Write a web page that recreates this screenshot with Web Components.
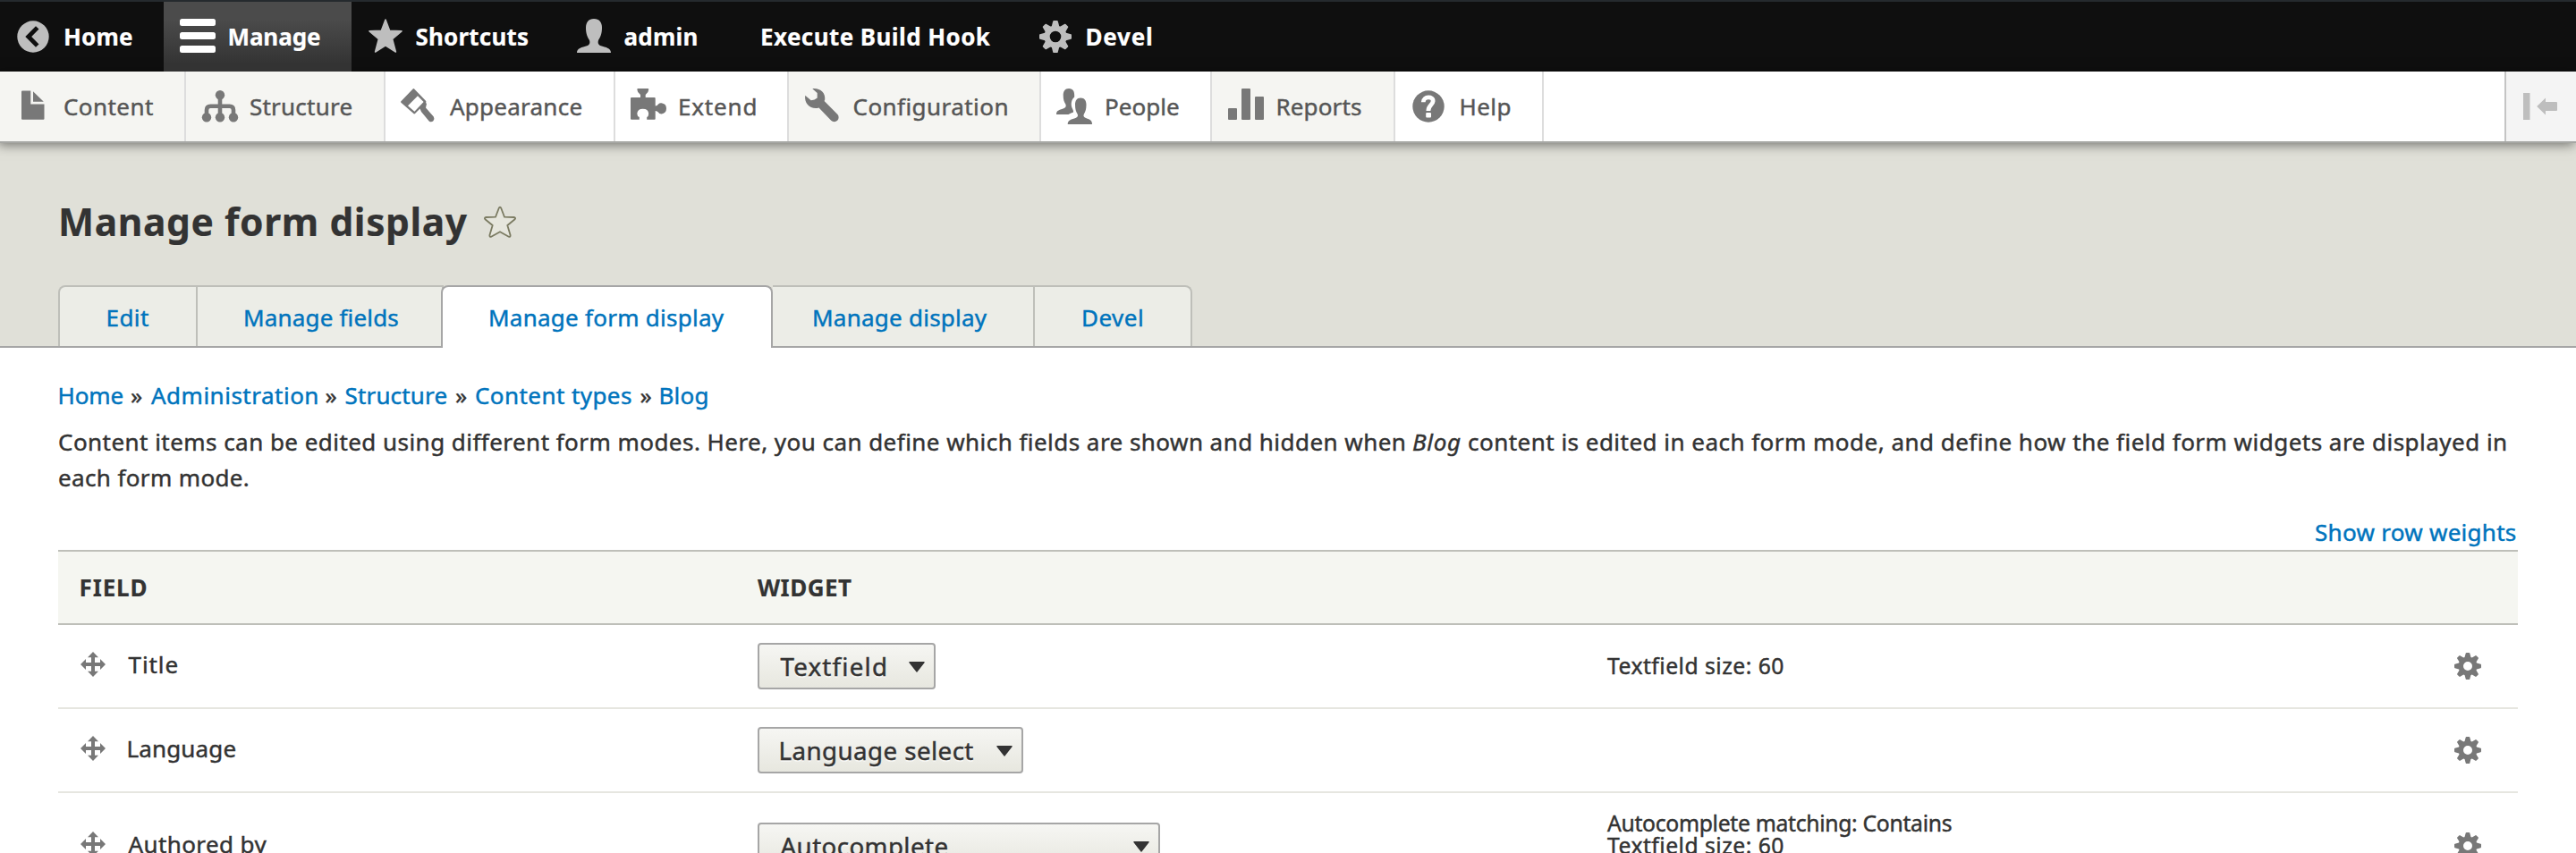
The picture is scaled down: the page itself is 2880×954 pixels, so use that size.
<!DOCTYPE html>
<html lang="en">
<head>
<meta charset="utf-8">
<title>Manage form display</title>
<style>
html,body{margin:0;padding:0}
body{width:2880px;height:954px;overflow:hidden;background:#fff;color:#333;font:26px/40px "Noto Sans","Open Sans",sans-serif}
</style>
</head>
<body>
<admin-page></admin-page>
<script>
/* Base class: attaches an open shadow root holding the given styles and markup */
class Base extends HTMLElement {
  mount(css, html) {
    if (!this.shadowRoot) this.attachShadow({mode: 'open'});
    const t = document.createElement('template');
    t.innerHTML = '<style>' + css + '</style>' + html;
    this.shadowRoot.replaceChildren(t.content.cloneNode(true));
  }
  a(n, d = '') { return this.getAttribute(n) ?? d; }
}

/* Text run tracked out to an exact optical width: w = ink width, size, weight, italic */
const ctx = document.createElement('canvas').getContext('2d');
customElements.define('fit-text', class extends Base {
  connectedCallback() {
    const text = this.textContent, size = +this.a('size', 26), wt = this.a('weight', '400');
    const st = this.hasAttribute('italic') ? 'italic' : 'normal', w = +this.a('w');
    ctx.font = `${st} ${wt} ${size}px "Noto Sans"`;
    ctx.letterSpacing = '0.01px';
    const m = ctx.measureText(text);
    const left = -m.actualBoundingBoxLeft, ink = m.actualBoundingBoxRight - left;
    const ls = (w - ink) / Math.max(1, text.length - 1);
    this.mount(`:host{display:block;flex:none;width:${w}px;white-space:pre;font-size:${size}px;font-weight:${wt};font-style:${st};letter-spacing:${ls.toFixed(3)}px;-webkit-text-stroke:${wt === '400' ? .45 : .2}px currentColor}
      span{display:block;width:max-content;margin-left:${(-left).toFixed(2)}px}`, '<span><slot></slot></span>');
  }
});

const cog = (c, cy, r, hole) => {
  const k = r / 18; let s = '';
  for (let i = 0; i < 8; i++) s += `<path transform="rotate(${i * 45} ${c} ${cy})" d="M${c - 4.4 * k} ${cy - 11 * k}L${c - 2.7 * k} ${cy - r + .6}q.2-.6 .9-.6h${5.4 * k - 1.8}q.7 0 .9.6L${c + 4.4 * k} ${cy - 11 * k}z"/>`;
  return s + `<circle cx="${c}" cy="${cy}" r="${(12.6 * k + hole) / 2}" fill="none" stroke="currentColor" stroke-width="${12.6 * k - hole}"/>`;
};
const ICONS = {
  back: '<path fill-rule="evenodd" d="M1.3 20a17.7 17.7 0 1 0 35.4 0a17.7 17.7 0 1 0-35.4 0zM22 8.2L25.5 11.6 17.2 20l8.3 8.4-3.5 3.3L10.3 20z"/>',
  menu: '<rect y="0" width="40" height="8" rx="2.5"/><rect y="15" width="40" height="8" rx="2.5"/><rect y="30" width="40" height="8" rx="2.5"/>',
  star: '<path stroke="currentColor" stroke-width="1.6" stroke-linejoin="round" d="M19 1L23.6 13.2 37 13.8 26.6 22.6 30.4 37 19 29.8 7.6 37 11.4 22.6 1 13.8 14.4 13.2z"/>',
  user: '<path d="M19 0c-6 0-9 4-9 10 0 7 2 11 4 14 1 3 0 5-2 6C5 32 0 33 0 38h38c0-5-5-6-12-8-2-1-3-3-2-6 2-3 4-7 4-14 0-6-3-10-9-10z"/>',
  cog: cog(18, 20, 18, 6.3),
  gear: cog(15, 15, 15, 5),
  content: '<path d="M1 2.5h9.3v15H25.5v16.2q0 1-1 1H1q-1 0-1-1V3.5q0-1 1-1zM13 3.2L24.8 14.8H13z"/>',
  structure: '<circle cx="20" cy="7.3" r="5.2"/><circle cx="5" cy="32.3" r="5.2"/><circle cx="20" cy="32.3" r="5.2"/><circle cx="35" cy="32.3" r="5.2"/><path fill="none" stroke="currentColor" stroke-width="4.6" d="M20 7v24M5 31V24q0-4.3 4.3-4.3H30.700q4.300 0 4.300 4.300V31"/>',
  appearance: '<path fill-rule="evenodd" d="M13.600.500q.800-.800 1.600 0L28 13.800q1 1.200 0 2.200L29 17 28 21.500 36.800 31.500q1.500 2.500-.4 4.700-2.300 2-4.700.2L23 26l-1.500-3.500L16 28q-.800.800-1.600 0L.400 15.800q-.800-.800 0-1.600zM19 8.200L8 19.200 15.400 25.800 25.600 15z"/>',
  extend: '<path d="M0 11q0-1 1-1H11V7Q7.300 4 7.300 1q0-1 1-1H19.300q1 0 1 1 0 3-3.600 6v3H26.700q1 0 1 1V19.500Q30 19.500 31 17.500q1.500-1.500 3.500-1.200Q40 17 40 22.300T34.500 28.500q-2.500 0-3.600-2-1-1.500-3.200-1.500V34q0 .8-1 .8H18.200V32q2-1 2-4-.5-5.200-6.400-5.300T7.300 28q0 3 2.500 4v2.800H1q-1 0-1-1z"/>',
  config: '<path d="M8.300.2C16.500-.9 23.200 4.500 22.200 12.600L21.600 14 36.200 28.800A5 5 0 0 1 36.200 35.800A5 5 0 0 1 29.200 35.800L15.500 21.600C7 24-1.200 17.500.200 7.700L6.700 13.300Q11 13 13.700 10.500V5z"/>',
  people: '<path d="M14 0C9.500 0 7.700 3.500 7.700 7.500c0 5 1 7.500 2.600 10 1 2 .2 3.500-1.600 4.500C4 24 0 24 0 29H13.500c2-1.300 4-2 5.500-2.500.3-1.500-.5-3-1.500-5-1.500-4-.8-9 2.700-12C20.500 3.500 19 0 14 0z"/><path d="M27.200 10.500c-4.500 0-6.200 3.500-6.200 7.500 0 5 1 8 2.600 10.500 1 2 .2 3.500-1.600 4.300-5 2-9.300 2-9.300 7.200H40c0-5.200-3-5.200-7.500-7.200-2-.8-2.600-2.300-1.600-4.300 1.600-2.500 2.600-5.500 2.600-10.500 0-4-1.800-7.500-6.300-7.500z"/>',
  reports: '<rect y="22" width="10" height="13" rx="1"/><rect x="15" width="10" height="35" rx="1"/><rect x="30" y="9" width="10" height="26" rx="1"/>',
  help: '<circle cx="18" cy="20" r="17.700"/><path fill="none" stroke="#fff" stroke-width="4.800" d="M12.300 15.300C12.300 8.300 23.600 8.300 23.100 14.200 22.700 18.700 17.900 18.500 17.900 25"/><rect x="15.200" y="27" width="5.800" height="5.600" rx="1" fill="#fff"/>',
  collapse: '<path d="M0 5h7.500v30H0zM15.200 20L25 10.500V15H37q1 0 1 1v8q0 1-1 1H25v4.500z"/>',
  fav: '<path fill="#e6e6dd" stroke="#7b7b62" stroke-width="1.8" stroke-linejoin="round" d="M18 1.600Q18.800 1.600 19.300 3L23 12.700 33.500 13Q36 13.600 34.600 15.200L26.300 22 29.600 33Q29.700 35.300 27.800 34.700L18 29.200 8.200 34.700Q6.300 35.300 6.400 33L9.700 22 1.400 15.200Q0 13.600 2.500 13L13 12.700 16.700 3Q17.200 1.600 18 1.600z"/>',
  move: '<path d="M14 0L20 6.200H16V12H22V8L28 14 22 20V16H16V21.800H20L14 28 8 21.800h4V16H6V20L0 14 6 8v4h6V6.200H8z"/>',
  caret: '<path d="M.3 1Q0 0 1 0H17q1 0 .7 1L9.500 11.500q-.5.700-1 0z"/>'
};
customElements.define('ui-icon', class extends Base {
  connectedCallback() {
    const w = this.a('w', 40), h = this.a('h', 40);
    this.mount(`:host{display:block;flex:none;width:${w}px;height:${h}px}svg{display:block;overflow:visible}`,
      `<svg width="${w}" height="${h}" viewBox="0 0 ${w} ${h}" fill="currentColor">${ICONS[this.a('name')]}</svg>`);
  }
});

/* One entry of the toolbar: w = cell width, pad = space before the icon, gap = space before the label */
customElements.define('bar-item', class extends Base {
  connectedCallback() {
    const icon = this.a('icon');
    this.mount(`:host{display:flex;flex:none;align-items:center;box-sizing:border-box;width:${this.a('w')}px;height:78px;padding-left:${this.a('pad')}px;line-height:78px;color:#fff}
      :host([active]){background:linear-gradient(#4b4b4b 25%,#333 90%)}
      :host([tray]){color:#565656;border-right:2px solid #ddd}
      :host([tinted]){background:#f5f5f2}
      ui-icon{color:#bebebe;margin-right:${this.a('gap', 0)}px}
      :host([active]) ui-icon{color:#fff}:host([tray]) ui-icon{color:#787878}`,
      (icon ? `<ui-icon name="${icon}"></ui-icon>` : '') +
      `<fit-text w="${this.a('tw')}" weight="${this.hasAttribute('tray') ? 400 : 700}">${this.a('label')}</fit-text>`);
  }
});
const items = (rows, extra) => rows.map(([label, w, pad, icon, gap, tw, flag]) =>
  `<bar-item label="${label}" w="${w}" pad="${pad}" icon="${icon}" gap="${gap}" tw="${tw}" ${extra} ${flag || ''}></bar-item>`).join('');

customElements.define('admin-toolbar', class extends Base {
  connectedCallback() {
    this.mount(`:host{display:block;position:relative;z-index:2}
      .top{display:flex;height:78px;background:#0f0f0f;border-top:2px solid #252a2e}
      .tray{display:flex;height:78px;background:#fff;border-bottom:2px solid #a6a7a4;box-shadow:-2px 2px 12px rgba(0,0,0,.5)}
      .toggle{display:flex;align-items:center;box-sizing:border-box;width:80px;margin-left:auto;padding-left:19px;background:#f4f4f4;border-left:2px solid #c4c4c4;color:#bebebe}`,
      '<div class="top">' + items([
        ['Home', 183, 18, 'back', 15, 75],
        ['Manage', 210, 18, 'menu', 15.500, 101.500, 'active'],
        ['Shortcuts', 237, 19, 'star', 13.500, 124.500],
        ['admin', 220, 15, 'user', 13.500, 81],
        ['Execute Build Hook', 294, 2, '', 0, 256],
        ['Devel', 200, 18, 'cog', 13.500, 71.500]
      ], '') + '</div><div class="tray">' + items([
        ['Content', 208, 24, 'content', 8, 99, 'tinted'],
        ['Structure', 223, 18, 'structure', 14, 113.500, 'tinted'],
        ['Appearance', 257, 17, 'appearance', 15, 147.500],
        ['Extend', 194, 17, 'extend', 15, 84.500],
        ['Configuration', 282, 18, 'config', 14.500, 171, 'tinted'],
        ['People', 191, 17, 'people', 16, 81],
        ['Reports', 205, 18, 'reports', 15.500, 93.500, 'tinted'],
        ['Help', 166, 19, 'help', 14.500, 55]
      ], 'tray') + '<div class="toggle"><ui-icon name="collapse"></ui-icon></div></div>');
  }
});

customElements.define('tab-link', class extends Base {
  connectedCallback() {
    this.mount(`:host{display:flex;flex:none;box-sizing:border-box;width:${this.a('w')}px;height:68px;padding-left:${this.a('pad')}px;line-height:69px;color:#0074bd;background:#ecede7;border:2px solid #bebfb9;border-width:2px 2px 0 0}
      :host([first]){border-left-width:2px;border-top-left-radius:8px}
      :host([last]){border-top-right-radius:8px}
      :host([active]){height:70px;background:#fff;border:2px solid #a6a6a6;border-bottom:0;border-radius:8px 8px 0 0;margin-left:-3px}`,
      `<fit-text w="${this.a('tw')}">${this.a('label')}</fit-text>`);
  }
});

customElements.define('page-header', class extends Base {
  connectedCallback() {
    this.mount(`:host{display:flex;flex-direction:column;justify-content:flex-end;box-sizing:border-box;height:229px;background:linear-gradient(#a6a6a6,#a6a6a6) bottom/100% 2px no-repeat #e0e0d8;padding-left:65px}
      .title{display:flex;align-items:center;height:60px;line-height:60px;margin:0 0 41px 3px}
      ui-icon{margin:0 0 1px 18px}
      nav{display:flex;align-items:flex-start;height:70px}`,
      `<div class="title"><fit-text w="455" size="42.500" weight="700">Manage form display</fit-text><ui-icon name="fav" w="36" h="36"></ui-icon></div>
      <nav><tab-link first label="Edit" w="156" pad="53.500" tw="45.500"></tab-link>
      <tab-link label="Manage fields" w="275" pad="53" tw="171.500"></tab-link>
      <tab-link active label="Manage form display" w="371" pad="53" tw="262"></tab-link>
      <tab-link label="Manage display" w="293" pad="46" tw="194"></tab-link>
      <tab-link last label="Devel" w="176" pad="54" tw="66"></tab-link></nav>`);
  }
});

customElements.define('bread-crumb', class extends Base {
  connectedCallback() {
    const crumbs = [['Home', 71, 9.500], ['Administration', 185.500, 10], ['Structure', 113, 10.500], ['Content types', 174, 10.500], ['Blog', 52, 0]];
    this.mount(`:host{display:flex;height:40px;line-height:40px;padding-left:1.500px}
      fit-text.l{color:#0074bd}fit-text.s{margin-right:9.500px}`,
      crumbs.map(([t, w, g], i) => `<fit-text class="l" w="${w}" style="margin-right:${g}px">${t}</fit-text>` + (i < 4 ? '<fit-text class="s" w="12.500">»</fit-text>' : '')).join(''));
  }
});

customElements.define('drop-select', class extends Base {
  connectedCallback() {
    this.mount(`:host{display:flex;align-items:center;box-sizing:border-box;width:${this.a('w')}px;height:52px;border:2px solid #a6a6a6;border-radius:4px;background:linear-gradient(#f6f6f3,#e7e7df);padding:0 10px 0 23.500px;line-height:48px;text-shadow:0 2px 0 rgba(255,255,255,.6)}
      ui-icon{margin:2px 0 0 auto;color:#333}`,
      `<fit-text w="${this.a('tw')}" size="27.700">${this.a('label')}</fit-text><ui-icon name="caret" w="18" h="12"></ui-icon>`);
  }
});

customElements.define('field-row', class extends Base {
  connectedCallback() {
    this.mount(`:host{display:grid;grid-template-columns:782px 950px 947px 1fr;align-items:center;box-sizing:border-box;height:${this.a('h', 94)}px;border-bottom:2px solid #e6e6e0;line-height:40px}
      .name{display:flex;align-items:center;padding-left:25px}
      ui-icon{color:#787878}.name ui-icon{margin:0 25.500px 4px 0}
      .name fit-text{margin-bottom:4px}
      .sum{line-height:25.500px;padding-bottom:${this.a('below', 0)}px}`,
      `<div class="name"><ui-icon name="move" w="28" h="28"></ui-icon><fit-text w="${this.a('tw')}">${this.a('name')}</fit-text></div>
      <drop-select w="${this.a('sw')}" tw="${this.a('stw')}" label="${this.a('widget')}"></drop-select>
      <div class="sum"><slot></slot></div><ui-icon name="gear" w="30" h="30"></ui-icon>`);
  }
});

customElements.define('field-table', class extends Base {
  connectedCallback() {
    this.mount(`:host{display:block;width:2750px}
      .head{display:grid;grid-template-columns:782px 1fr;height:80px;line-height:80px;background:#f5f6f1;border:2px solid #bebfb9;border-width:2px 0}
      .head fit-text:first-child{margin-left:25.500px}`,
      `<div class="head"><fit-text w="73" weight="700">FIELD</fit-text><fit-text w="105" weight="700">WIDGET</fit-text></div>
      <field-row name="Title" tw="55" widget="Textfield" sw="199" stw="117.500"><fit-text size="24.700" w="196.500">Textfield size: 60</fit-text></field-row>
      <field-row name="Language" tw="120" widget="Language select" sw="297" stw="216"></field-row>
      <field-row h="120" below="25.500" name="Authored by" tw="155" widget="Autocomplete" sw="450" stw="187"><fit-text size="24.700" w="385">Autocomplete matching: Contains</fit-text><fit-text size="24.700" w="196.500">Textfield size: 60</fit-text></field-row>`);
  }
});

customElements.define('admin-page', class extends Base {
  connectedCallback() {
    this.mount(`:host{display:block;width:2880px;height:954px;overflow:hidden}
      main{padding:33px 65px 0}
      .help{padding:12px 0 0 1px}.line{display:flex;height:40px}
      .line fit-text+fit-text{margin-left:9px}
      .weights{display:flex;justify-content:flex-end;height:40px;margin-top:21px;padding-right:2px;color:#0074bd}`,
      `<admin-toolbar></admin-toolbar><page-header></page-header>
      <main><bread-crumb></bread-crumb>
      <div class="help"><div class="line"><fit-text w="1505">Content items can be edited using different form modes. Here, you can define which fields are shown and hidden when</fit-text><fit-text italic w="53">Blog</fit-text><fit-text w="1160">content is edited in each form mode, and define how the field form widgets are displayed in</fit-text></div>
      <div class="line"><fit-text w="212">each form mode.</fit-text></div></div>
      <div class="weights"><fit-text w="224">Show row weights</fit-text></div>
      <field-table></field-table></main>`);
  }
});
</script>
</body>
</html>
